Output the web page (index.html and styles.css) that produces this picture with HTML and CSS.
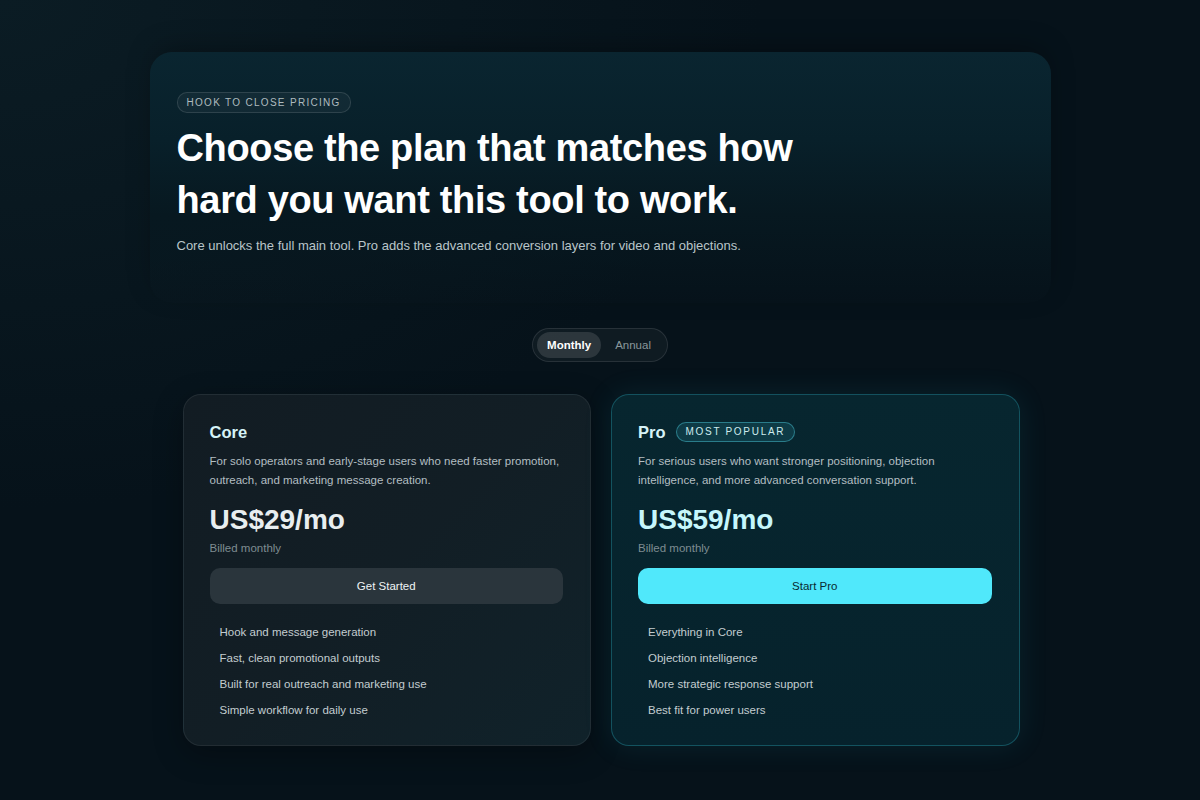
FILE: index.html
```html
<!DOCTYPE html>
<html lang="en">
<head>
  <meta charset="UTF-8">
  <meta name="viewport" content="width=device-width, initial-scale=1.0">
  <title>Hook to Close Pricing</title>
  <link rel="stylesheet" href="styles.css">
</head>
<body>
  <div class="page">
    <section class="hero">
      <span class="eyebrow">HOOK TO CLOSE PRICING</span>
      <h1>Choose the plan that matches how<br>hard you want this tool to work.</h1>
      <p class="lead">Core unlocks the full main tool. Pro adds the advanced conversion layers for video and objections.</p>
    </section>

    <div class="toggle-row">
      <div class="toggle">
        <button type="button" class="toggle-btn active">Monthly</button>
        <button type="button" class="toggle-btn">Annual</button>
      </div>
    </div>

    <div class="plans">
      <div class="plan">
        <div class="plan-head">
          <h2>Core</h2>
        </div>
        <p class="plan-desc">For solo operators and early-stage users who need faster promotion, outreach, and marketing message creation.</p>
        <div class="price">US$29/mo</div>
        <div class="billing">Billed monthly</div>
        <button type="button" class="cta">Get Started</button>
        <ul class="features">
          <li>Hook and message generation</li>
          <li>Fast, clean promotional outputs</li>
          <li>Built for real outreach and marketing use</li>
          <li>Simple workflow for daily use</li>
        </ul>
      </div>

      <div class="plan featured">
        <div class="plan-head">
          <h2>Pro</h2>
          <span class="popular">MOST POPULAR</span>
        </div>
        <p class="plan-desc">For serious users who want stronger positioning, objection intelligence, and more advanced conversation support.</p>
        <div class="price">US$59/mo</div>
        <div class="billing">Billed monthly</div>
        <button type="button" class="cta">Start Pro</button>
        <ul class="features">
          <li>Everything in Core</li>
          <li>Objection intelligence</li>
          <li>More strategic response support</li>
          <li>Best fit for power users</li>
        </ul>
      </div>
    </div>
  </div>
</body>
</html>
```

FILE: styles.css
```css
body {
  margin: 0;
  min-height: 800px;
  font-family: 'Liberation Sans', Arial, Helvetica, sans-serif;
  color: #e6eef0;
  background-color: #06121a;
  background-image: radial-gradient(ellipse at 0% 0%, #0b1c24 0%, rgba(11, 28, 36, 0) 45%);
}

.page {
  width: 901px;
  margin: 0 auto;
  padding-top: 52px;
}

/* top panel fades into the page towards the bottom */
.hero {
  padding: 40px 27px 48px;
  border-radius: 22px;
  background: linear-gradient(180deg, #0a2530 0%, #08202a 35%, #071820 65%, rgba(6, 18, 26, 0) 100%);
  box-shadow: 0 -8px 28px -6px rgba(0, 0, 0, 0.35);
}

.eyebrow {
  display: inline-block;
  padding: 0 9px;
  height: 19px;
  line-height: 19px;
  font-size: 10px;
  letter-spacing: 1.3px;
  color: #aebbbf;
  border: 1px solid rgba(255, 255, 255, 0.12);
  border-radius: 10px;
  background-color: rgba(255, 255, 255, 0.04);
}

h1 {
  margin: 9px 0 0;
  font-size: 38px;
  line-height: 52px;
  font-weight: bold;
  color: #ffffff;
  letter-spacing: -0.35px;
}

.lead {
  margin: 11px 0 0;
  font-size: 13px;
  line-height: 18px;
  color: #b9c5c9;
}

.toggle-row {
  display: flex;
  justify-content: center;
  margin-top: 25px;
}

.toggle {
  display: flex;
  gap: 4px;
  padding: 3px 6px 3px 4px;
  border: 1px solid rgba(255, 255, 255, 0.1);
  border-radius: 17px;
  background-color: rgba(255, 255, 255, 0.04);
}

.toggle-btn {
  height: 26px;
  padding: 0 10px;
  border: none;
  border-radius: 13px;
  background: none;
  font-family: inherit;
  font-size: 11.5px;
  color: #8a979b;
}

.toggle-btn.active {
  font-weight: bold;
  color: #ffffff;
  background-color: rgba(255, 255, 255, 0.12);
}

.plans {
  display: grid;
  grid-template-columns: 1fr 1fr;
  gap: 20px;
  margin: 32px 31px 0 33px;
}

.plan {
  padding: 26px 27px 26px 26px;
  border-radius: 18px;
  border: 1px solid rgba(255, 255, 255, 0.07);
  background: linear-gradient(135deg, #121c23 0%, #121e25 50%, #10222a 100%);
  box-shadow: 0 8px 30px rgba(0, 0, 0, 0.3);
}

.plan.featured {
  border-color: rgba(35, 140, 155, 0.45);
  background: linear-gradient(180deg, #07262f 0%, #06222c 100%);
  box-shadow: 0 0 30px rgba(40, 190, 210, 0.1);
}

.plan-head {
  display: flex;
  align-items: center;
  gap: 10px;
  height: 22px;
}

h2 {
  margin: 0;
  font-size: 16.5px;
  font-weight: bold;
  color: #d6f3f7;
}

.popular {
  display: inline-block;
  height: 18px;
  line-height: 18px;
  padding: 0 9px;
  font-size: 10px;
  letter-spacing: 1.7px;
  color: #cdebee;
  border: 1px solid rgba(70, 190, 205, 0.5);
  border-radius: 10px;
  background-color: rgba(30, 100, 115, 0.35);
}

.plan-desc {
  margin: 9px 0 0;
  font-size: 11.5px;
  line-height: 19px;
  color: #b3bec2;
}

.price {
  margin-top: 13px;
  font-size: 28px;
  line-height: 34px;
  font-weight: bold;
  color: #e8eef0;
}

.featured .price {
  color: #c6f7fc;
}

.billing {
  margin-top: 3px;
  font-size: 11.5px;
  line-height: 16px;
  color: #7e8c91;
}

.cta {
  display: block;
  width: 100%;
  height: 36px;
  margin-top: 12px;
  border: none;
  border-radius: 10px;
  font-family: inherit;
  font-size: 11.5px;
  color: #eef3f4;
  background-color: #2a353c;
}

.featured .cta {
  color: #0a2a30;
  background-color: #50e8fb;
}

.features {
  list-style: none;
  margin: 19px 0 0;
  padding-left: 10px;
}

.features li {
  font-size: 11.5px;
  line-height: 18px;
  color: #c3cdd0;
}

.features li + li {
  margin-top: 8px;
}
```
